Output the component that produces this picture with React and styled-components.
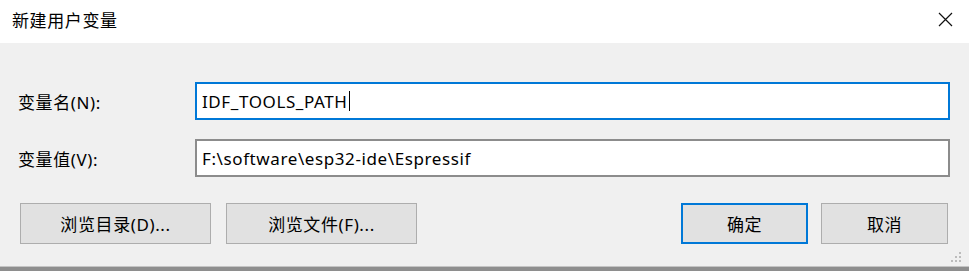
import styled, { createGlobalStyle } from 'styled-components';

const GlobalStyle = createGlobalStyle`
  html, body {
    margin: 0;
    padding: 0;
    background: #f0f0f0;
  }
  body {
    font-family: "Noto Sans", "Noto Sans CJK SC", sans-serif;
    letter-spacing: 0.6px;
    color: #000;
  }
`;

const Dialog = styled.div`
  width: 969px;
  height: 271px;
  display: flex;
  flex-direction: column;
  background: #f0f0f0;
  overflow: hidden;
`;

const TitleBar = styled.div`
  height: 43px;
  flex: none;
  display: flex;
  align-items: center;
  justify-content: space-between;
  background: #fff;
  padding: 0 16px 4px 12px;
  box-sizing: border-box;
`;

const Title = styled.span`
  font-size: 17px;
`;

const Body = styled.div`
  flex: 1;
  display: flex;
  flex-direction: column;
  padding: 39px 19px 0 18px;
  position: relative;
`;

const Row = styled.div`
  display: grid;
  grid-template-columns: 177px 1fr;
  align-items: center;
  margin-bottom: 19px;
`;

const Label = styled.label`
  font-size: 17px;
`;

const Field = styled.div`
  height: 38px;
  box-sizing: border-box;
  background: #fff;
  border: ${p => (p.focused ? '2px solid #0078d7' : '2px solid #8c8c8c')};
  display: flex;
  align-items: center;
  padding-left: 5px;
  font-size: 17px;
`;

const Caret = styled.span`
  display: inline-block;
  width: 1px;
  height: 20px;
  background: #000;
  margin-left: 1px;
`;

const ButtonRow = styled.div`
  display: flex;
  align-items: center;
  margin-top: 7px;
  padding-left: 2px;
  padding-right: 2px;
`;

const Button = styled.div`
  width: ${p => p.w}px;
  height: 41px;
  box-sizing: border-box;
  background: #e1e1e1;
  border: ${p => (p.primary ? '2px solid #0078d7' : '1px solid #adadad')};
  display: flex;
  align-items: center;
  justify-content: center;
  font-size: 17px;
  margin-right: ${p => p.gap || 0}px;
`;

const Spacer = styled.div`
  flex: 1;
`;

const Grip = styled.svg`
  position: absolute;
  right: 7px;
  bottom: 3px;
`;

const Footer = styled.div`
  height: 4px;
  flex: none;
  border-top: 1px solid #c4c4c4;
  background: #8e8e8e;
`;

const CloseIcon = () => (
  <svg width="15" height="15" viewBox="0 0 15 15">
    <path d="M1 1 L14 14 M14 1 L1 14" stroke="#111" strokeWidth="1.2" />
  </svg>
);

const App = () => {
  const dots = [
    [8, 0],
    [4, 4], [8, 4],
    [0, 8], [4, 8], [8, 8],
  ];
  return (
    <>
      <GlobalStyle />
      <Dialog>
        <TitleBar>
          <Title>新建用户变量</Title>
          <CloseIcon />
        </TitleBar>
        <Body>
          <Row>
            <Label>变量名(N):</Label>
            <Field focused>
              IDF_TOOLS_PATH
              <Caret />
            </Field>
          </Row>
          <Row>
            <Label>变量值(V):</Label>
            <Field>F:\software\esp32-ide\Espressif</Field>
          </Row>
          <ButtonRow>
            <Button w={191} gap={15}>浏览目录(D)...</Button>
            <Button w={191}>浏览文件(F)...</Button>
            <Spacer />
            <Button w={127} gap={13} primary>确定</Button>
            <Button w={127}>取消</Button>
          </ButtonRow>
          <Grip width="11" height="11" viewBox="0 0 11 11">
            {dots.map(([x, y]) => (
              <rect key={`${x}-${y}`} x={x} y={y} width="2" height="2" fill="#bcbcbc" />
            ))}
          </Grip>
        </Body>
        <Footer />
      </Dialog>
    </>
  );
};

export default App;
